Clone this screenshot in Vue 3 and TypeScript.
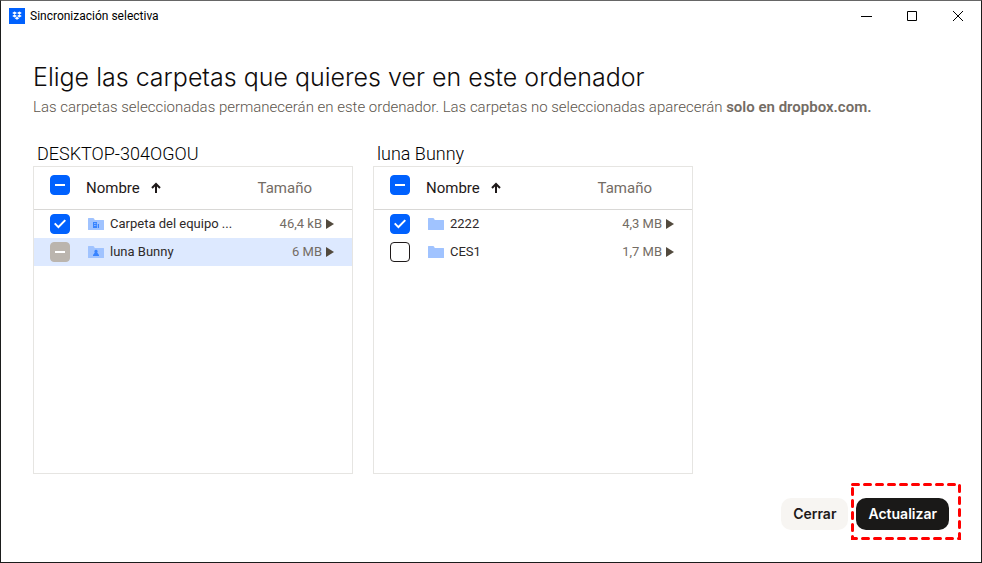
<script setup lang="ts">
import { reactive } from 'vue'

type CheckState = 'on' | 'off' | 'mixed'
type FolderKind = 'plain' | 'team' | 'person'

interface FolderRow {
  name: string
  size: string
  state: CheckState
  kind: FolderKind
  muted?: boolean
  selected?: boolean
}

interface Panel {
  id: string
  title: string
  rows: FolderRow[]
}

const panels = reactive<Panel[]>([
  {
    id: 'desktop',
    title: 'DESKTOP-304OGOU',
    rows: [
      { name: 'Carpeta del equipo ...', size: '46,4 kB', state: 'on', kind: 'team' },
      { name: 'luna Bunny', size: '6 MB', state: 'mixed', kind: 'person', muted: true, selected: true },
    ],
  },
  {
    id: 'luna',
    title: 'luna Bunny',
    rows: [
      { name: '2222', size: '4,3 MB', state: 'on', kind: 'plain' },
      { name: 'CES1', size: '1,7 MB', state: 'off', kind: 'plain' },
    ],
  },
])

function toggle(row: FolderRow) {
  row.state = row.state === 'on' ? 'off' : 'on'
}
</script>

<template>
  <div class="window">
    <header class="titlebar">
      <svg class="logo" viewBox="0 0 16 16" aria-hidden="true">
        <rect width="16" height="16" fill="#0061fe" />
        <path
          fill="#fff"
          d="M5.6 3.6 8 5.1 5.6 6.6 3.2 5.1zM10.4 3.6l2.4 1.5-2.4 1.5L8 5.1zM5.6 6.6 8 8.1 5.6 9.6 3.2 8.1zM10.4 6.6l2.4 1.5-2.4 1.5L8 8.1zM5.7 10.2 8 8.8l2.3 1.4L8 11.7z"
        />
      </svg>
      <span class="caption">Sincronización selectiva</span>
      <div class="controls">
        <button type="button" aria-label="Minimizar">
          <svg viewBox="0 0 12 12"><path d="M1 6.5h11" /></svg>
        </button>
        <button type="button" aria-label="Maximizar">
          <svg viewBox="0 0 12 12"><path d="M1.5 1.5h9v9h-9z" /></svg>
        </button>
        <button type="button" aria-label="Cerrar ventana">
          <svg viewBox="0 0 12 12"><path d="m1 1 10 10M11 1 1 11" /></svg>
        </button>
      </div>
    </header>

    <main class="content">
      <h1>Elige las carpetas que quieres ver en este ordenador</h1>
      <p class="intro">
        Las carpetas seleccionadas permanecerán en este ordenador. Las carpetas no seleccionadas aparecerán
        <strong>solo en dropbox.com.</strong>
      </p>

      <div class="panels">
        <section v-for="panel in panels" :key="panel.id" class="panel">
          <h2>{{ panel.title }}</h2>
          <div class="box">
            <table>
              <colgroup>
                <col class="col-check" />
                <col />
                <col class="col-size" />
              </colgroup>
              <thead>
                <tr>
                  <th class="check">
                    <input type="checkbox" :indeterminate="true" :aria-label="`Todo en ${panel.title}`" />
                  </th>
                  <th class="name">
                    <button type="button" class="sort">
                      Nombre
                      <svg viewBox="0 0 12 12" aria-hidden="true"><path d="M6 11V2M2 6l4-4 4 4" /></svg>
                    </button>
                  </th>
                  <th class="size">Tamaño</th>
                </tr>
              </thead>
              <tbody>
                <tr v-for="row in panel.rows" :key="row.name" :class="{ selected: row.selected }">
                  <td class="check">
                    <input
                      :id="`${panel.id}-${row.name}`"
                      type="checkbox"
                      :class="{ muted: row.muted }"
                      :checked="row.state === 'on'"
                      :indeterminate="row.state === 'mixed'"
                      @change="toggle(row)"
                    />
                  </td>
                  <td class="name">
                    <label :for="`${panel.id}-${row.name}`">
                      <svg class="folder" viewBox="0 0 16 14" aria-hidden="true">
                        <path fill="#a0c3ff" d="M0 1.5Q0 1 .5 1h4.700q.5 0 .8.5l.8 1.500h8.700q.5 0 .5.5v9q0 .5-.5.5H.5q-.5 0-.5-.5z" />
                        <path v-if="row.kind === 'team'" fill="#3984ff" fill-rule="evenodd" d="M5 5h4v6H5zM6 6v1h.8V6zm1.400 0v1h.8V6zM6 8v1h.8V8zm1.400 0v1h.8V8zM9.800 7H11v4H9.800z" />
                        <path v-if="row.kind === 'person'" fill="#3984ff" d="M8 4.700a1.600 1.600 0 0 1 1.200 2.700L11 10v1H5v-1l1.800-2.600A1.600 1.600 0 0 1 8 4.700z" />
                      </svg>
                      {{ row.name }}
                    </label>
                  </td>
                  <td class="size">
                    <div class="size-cell">
                      {{ row.size }}
                      <button type="button" class="open" :aria-label="`Abrir ${row.name}`">
                        <svg viewBox="0 0 8 10"><path d="M0 0l8 5-8 5z" /></svg>
                      </button>
                    </div>
                  </td>
                </tr>
              </tbody>
            </table>
          </div>
        </section>
      </div>

      <footer class="actions">
        <button type="button" class="btn">Cerrar</button>
        <div class="highlighted">
          <button type="button" class="btn primary">Actualizar</button>
          <svg class="outline" viewBox="0 0 110 57" aria-hidden="true">
            <rect x="1.5" y="1.5" width="107" height="54" />
          </svg>
        </div>
      </footer>
    </main>
  </div>
</template>

<style>
body {
  background: #fff;
}
</style>

<style scoped>
.window {
  display: flex;
  flex-direction: column;
  box-sizing: border-box;
  min-height: 100vh;
  border: 1px solid #1b1d1c;
  border-top-color: #666;
  background: #fff;
  color: #1e1919;
  font-family: Roboto, 'Liberation Sans', sans-serif;
}

button {
  margin: 0;
  padding: 0;
  border: 0;
  background: none;
  color: inherit;
  font: inherit;
}

.titlebar {
  display: flex;
  align-items: center;
  height: 29px;
  padding-left: 8px;
}

.logo {
  width: 16px;
  height: 16px;
}

.caption {
  margin-left: 5px;
  color: #000;
  font-size: 12px;
  line-height: 16px;
}

.controls {
  display: flex;
  margin-left: auto;
}

.controls button {
  display: grid;
  place-items: center;
  width: 46px;
  height: 29px;
}

.controls svg {
  width: 12px;
  height: 12px;
  fill: none;
  stroke: #000;
}

.content {
  display: flex;
  flex: 1;
  flex-direction: column;
  padding: 32px;
}

h1 {
  margin: 0;
  color: #0f0c0c;
  font: 300 25px/30px Inter, sans-serif;
}

.intro {
  margin: 4px 0 0;
  color: #5c554d;
  font-size: 15px;
  font-weight: 300;
  line-height: 22px;
}

.intro strong {
  color: #736c64;
  font-weight: 600;
}

.panels {
  display: flex;
  flex: 1;
  gap: 20px;
  margin-top: 24px;
}

.panel {
  display: flex;
  flex: 0 1 320px;
  flex-direction: column;
}

h2 {
  margin: 0;
  padding-left: 4px;
  color: #000;
  font-size: 18px;
  font-weight: 300;
  line-height: 24px;
}

.box {
  flex: 1;
  border: 1px solid #e6e5e2;
}

table {
  width: 100%;
  border-collapse: separate;
  border-spacing: 0;
  table-layout: fixed;
}

.col-check {
  width: 52px;
}

.col-size {
  width: 100px;
}

th,
td {
  height: 28px;
  padding: 0;
  text-align: left;
}

th {
  height: 42px;
  border-bottom: 1px solid #d9d8d6;
  font-size: 15px;
  font-weight: 400;
}

td {
  color: #2e2929;
  font-size: 13px;
}

.check {
  padding-left: 16px;
  line-height: 0;
}

th.check {
  height: 36px;
  padding-bottom: 6px;
}

th.size {
  padding-right: 40px;
  color: #736c64;
  text-align: right;
}

input {
  display: inline-grid;
  place-items: center;
  width: 20px;
  height: 20px;
  margin: 0;
  border: 1px solid #1e1919;
  border-radius: 4px;
  background: #fff;
  appearance: none;
}

input:checked,
input:indeterminate {
  border-color: #0061fe;
  background: #0061fe;
}

input.muted:indeterminate {
  border-color: #bbb5ae;
  background: #bbb5ae;
}

input:indeterminate::before {
  width: 10px;
  height: 2px;
  background: #fff;
  content: '';
}

input:checked::before {
  width: 12px;
  height: 10px;
  background: #fff;
  clip-path: polygon(0 50%, 12% 38%, 36% 68%, 88% 6%, 100% 18%, 37% 94%);
  content: '';
}

.sort {
  display: flex;
  align-items: center;
  gap: 10px;
}

.sort svg {
  width: 12px;
  height: 12px;
  fill: none;
  stroke: #1e1919;
  stroke-width: 2;
}

label {
  display: flex;
  align-items: center;
  gap: 6px;
  padding-left: 2px;
  line-height: 14px;
  white-space: nowrap;
}

.folder {
  width: 16px;
  height: 14px;
}

.selected {
  background: #dde9ff;
}

.size-cell {
  display: flex;
  align-items: center;
  justify-content: flex-end;
  gap: 4px;
  padding-right: 18px;
  color: #736c64;
  line-height: 14px;
}

.open {
  display: flex;
}

.open svg {
  width: 8px;
  height: 10px;
  fill: #524a3e;
}

.actions {
  display: flex;
  justify-content: flex-end;
  gap: 8px;
  margin-top: 24px;
}

.btn {
  height: 32px;
  padding: 0 12px;
  border-radius: 10px;
  background: #f7f5f2;
  color: #1e1919;
  font: 600 14px/20px Inter, sans-serif;
}

.primary {
  background: #1a1918;
  color: #fff;
}

.highlighted {
  position: relative;
}

.outline {
  position: absolute;
  top: -15px;
  left: -5px;
  width: 110px;
  height: 57px;
  fill: none;
  stroke: #f00;
  stroke-dasharray: 6 6;
  stroke-linecap: round;
  stroke-width: 3;
  pointer-events: none;
}
</style>
